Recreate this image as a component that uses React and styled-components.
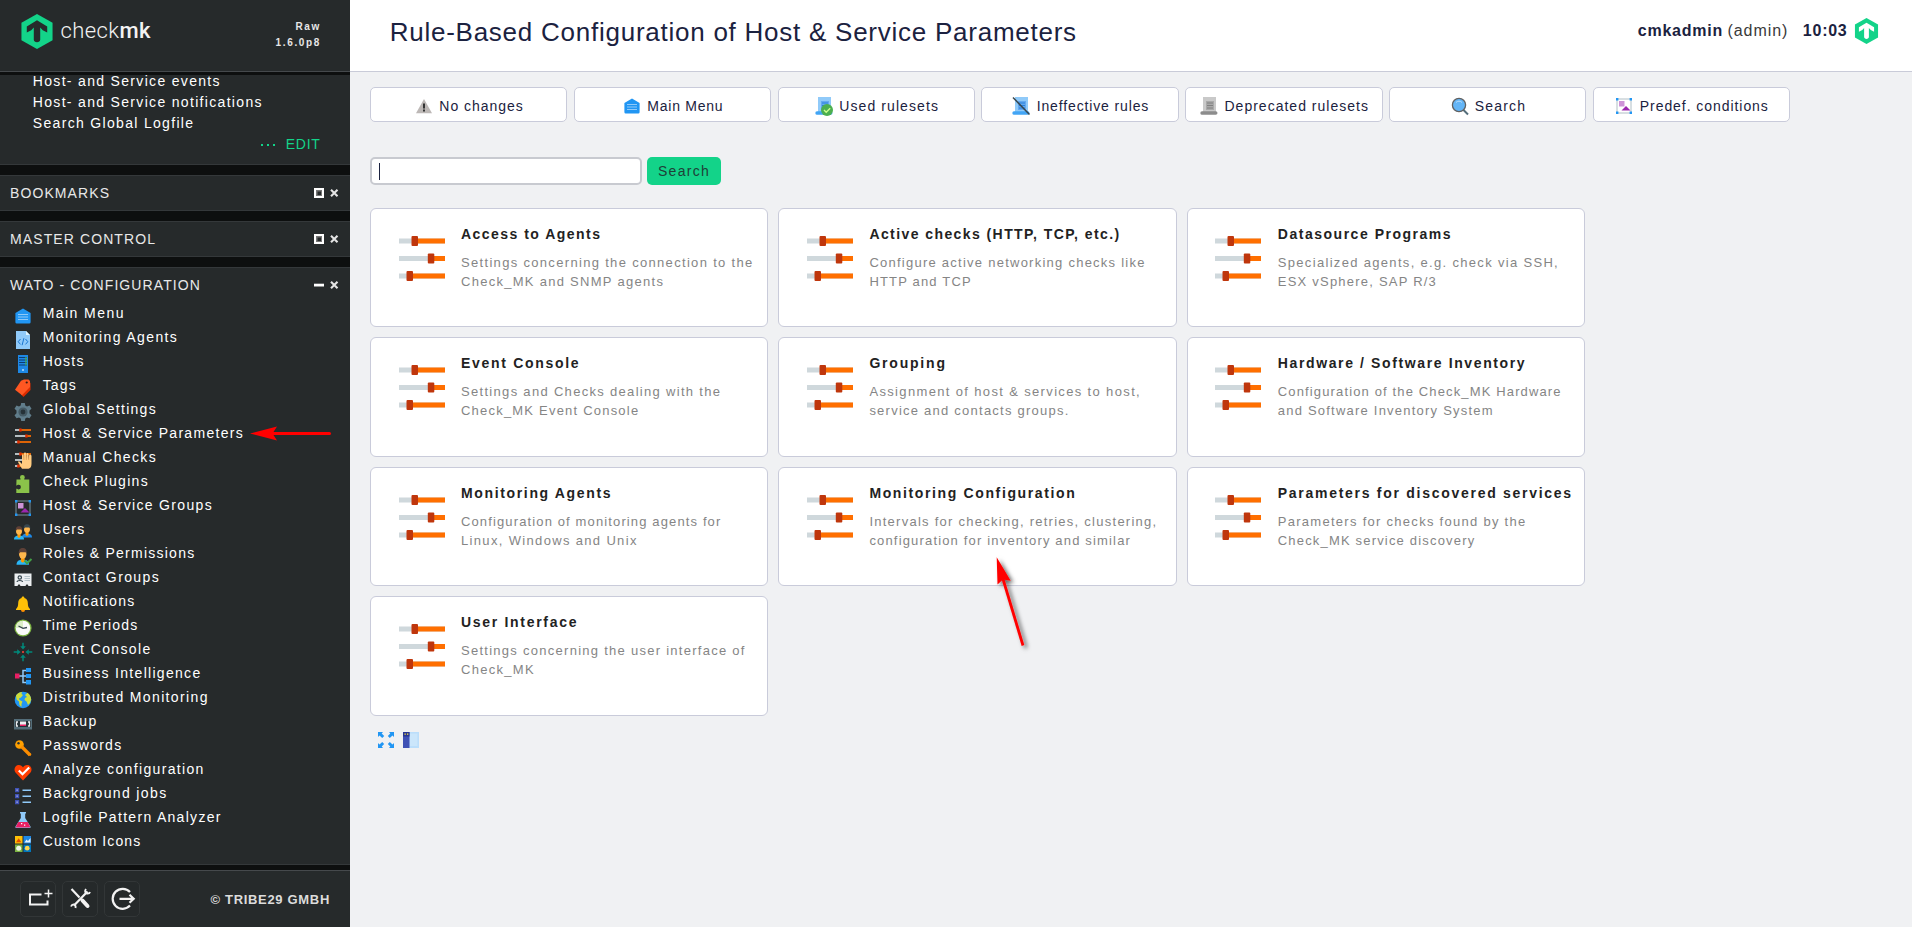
import React from "react";
import styled, { createGlobalStyle } from "styled-components";

const GlobalStyle = createGlobalStyle`
  * { box-sizing: border-box; }
  html, body, #root { margin: 0; height: 100%; }
  body { overflow: hidden; background: #f0f1f3; color: #1b2240; font: 14px "Liberation Sans", Arial, sans-serif; }
  svg { display: block; flex: none; overflow: visible; }
`;

const Page = styled.div`
  display: flex;
  position: relative;
  width: 1912px;
  height: 927px;
`;

/* ---------- sidebar ---------- */
const Sidebar = styled.aside`
  width: 350px;
  flex: none;
  display: flex;
  flex-direction: column;
  background: #0d0f0f;
  color: #fff;
`;
const SideHead = styled.header`
  height: 72px;
  flex: none;
  margin-bottom: 3px;
  padding: 14px 29px 0 20.5px;
  display: flex;
  background: #262a2b;
  border-bottom: 1px solid #45494c;
`;
const Wordmark = styled.div`
  margin: 5px auto 0 8px;
  font: 300 22px/24px Roboto, sans-serif;
  letter-spacing: 0.4px;
  color: #f2f2f2;
  b { font-weight: 500; }
`;
const Version = styled.div`
  padding-top: 5px;
  text-align: right;
  font-weight: bold;
  font-size: 10px;
  line-height: 16px;
  letter-spacing: 1.65px;
  color: #e6e6e6;
`;
const Snapins = styled.div`
  flex: 1;
  min-height: 0;
  overflow: hidden;
  display: flex;
  flex-direction: column;
  gap: 10px;
`;
const Snapin = styled.section`
  flex: none;
  background: #262a2b;
  border-top: 1px solid #34383a;
  border-bottom: 1px solid #34383a;
`;
const ScrolledSnapin = styled(Snapin)`
  padding: 0 29.5px 9px 32.800px;
  border-top: 0;
  line-height: 21px;
  letter-spacing: 1.32px;
`;
const TopLink = styled.div`
  height: 17px;
  line-height: 13px;
`;
const EditLink = styled.div`
  display: flex;
  justify-content: flex-end;
  align-items: center;
  gap: 11px;
  color: #13d389;
  font-size: 14px;
  letter-spacing: 0.7px;
`;
const SnapinHead = styled.div`
  display: flex;
  align-items: center;
  height: 34px;
  padding: 0 12px 0 10px;
  letter-spacing: 1.1px;
  color: #e8e8e8;
`;
const SnapinTitle = styled.span`
  flex: 1;
`;
const NavList = styled.ul`
  margin: 0;
  padding: 2px 0 8px 14px;
  list-style: none;
`;
const NavItem = styled.li`
  display: flex;
  gap: 10.7px;
  height: 24px;
  line-height: 18px;
  letter-spacing: ${(p) => p.$track}px;
  white-space: nowrap;
  svg { margin-top: 3px; }
`;
const SideFoot = styled.footer`
  display: flex;
  align-items: center;
  gap: 6px;
  height: 57px;
  flex: none;
  margin-top: 5px;
  padding: 0 20px;
  background: #262a2b;
  border-top: 1px solid #45494c;
`;
const FootButton = styled.button`
  width: 36px;
  height: 36px;
  padding: 0;
  display: grid;
  place-items: center;
  background: #25292a;
  border: 1px solid #323637;
  border-radius: 5px;
`;
const Copyright = styled.span`
  margin-left: auto;
  font-weight: bold;
  font-size: 13px;
  letter-spacing: 0.68px;
  color: #dcdcdc;
`;

/* ---------- main area ---------- */
const Main = styled.main`
  flex: 1;
  min-width: 0;
`;
const TopBar = styled.header`
  display: flex;
  height: 72px;
  padding: 17px 33px 0 39.700px;
  background: #fff;
  border-bottom: 1px solid #c9cbd8;
`;
const Title = styled.h1`
  margin: 0 auto 0 0;
  font-size: 26px;
  font-weight: normal;
  line-height: 30px;
  letter-spacing: 0.75px;
`;
const UserInfo = styled.div`
  display: flex;
  height: 28px;
  font-size: 16px;
  line-height: 27px;
  letter-spacing: 0.75px;
  b + span { margin: 0 14.500px 0 4.500px; color: #3a3a3a; letter-spacing: 0.95px; }
  svg { margin: 1px 0 0 6.500px; }
`;
const Content = styled.div`
  padding: 15px 20px;
`;
const ActionBar = styled.nav`
  display: grid;
  grid-template-columns: repeat(7, 197.4px);
  gap: 6.4px;
`;
const Action = styled.a`
  display: flex;
  align-items: center;
  justify-content: center;
  gap: 6.3px;
  height: 35px;
  padding: 3px 0 0 1.500px;
  background: #fff;
  border: 1px solid #c9cbda;
  border-radius: 5px;
  letter-spacing: ${(p) => p.$track}px;
  white-space: nowrap;
`;
const SearchForm = styled.form`
  display: flex;
  gap: 5px;
  margin: 35px 0 23px;
`;
const SearchField = styled.div`
  width: 272px;
  height: 28px;
  padding: 4px 0 0 7px;
  background: #fff;
  border: 2px solid #c8cad0;
  border-radius: 5px;
`;
const Caret = styled.div`
  width: 1px;
  height: 17px;
  background: #1b2240;
`;
const SearchButton = styled.button`
  width: 74px;
  height: 28px;
  padding: 0;
  border: 0;
  border-radius: 5px;
  background: #13d389;
  color: #1f4038;
  font: 14px "Liberation Sans", Arial, sans-serif;
  letter-spacing: 1.3px;
`;
const Cards = styled.div`
  display: grid;
  grid-template-columns: repeat(3, 398.4px);
  grid-auto-rows: 119.4px;
  gap: 10px;
`;
const Card = styled.a`
  display: flex;
  gap: 16.4px;
  padding: 16px 0 0 27.6px;
  background: #fff;
  border: 1px solid #c9cbda;
  border-radius: 6px;
  svg { margin-top: 14px; }
`;
const CardTitle = styled.h3`
  margin: 0 0 10px;
  color: #222;
  font-size: 14px;
  line-height: 18px;
  letter-spacing: ${(p) => p.$track}px;
  white-space: nowrap;
`;
const CardLine = styled.div`
  color: #858585;
  font-size: 13px;
  line-height: 19px;
  letter-spacing: ${(p) => p.$track}px;
  white-space: nowrap;
`;
const PageTools = styled.div`
  display: flex;
  gap: 9px;
  margin: 16px 0 0 8px;
`;
const Annotations = styled.svg`
  position: absolute;
  inset: 0;
  pointer-events: none;
`;

/* ---------- drawings ---------- */
const Hexagon = ({ w, h, inner }) => (
  <svg width={w} height={h} viewBox="0 0 32 36">
    <path fill="#13d389" d="M16 0 32 9v18l-16 9L0 27V9z" />
    <path fill={inner} d="M16 6.5 26.5 12.8v6.2l-4.600-2.400-2.600-2.800v12.600c0 1.400-1.500 2.600-3.300 2.600s-3.300-1.200-3.300-2.600V13.800L10.100 16.600 5.500 19v-6.200z" />
  </svg>
);

const Sliders = ({ w = 46, h = 38 }) => (
  <svg width={w} height={h} viewBox="0 0 46 38">
    {[[0.5, 12.500], [18, 28.800], [35.500, 7.500]].map(([y, x]) => (
      <g key={y} transform={`translate(0 ${y - 1})`}>
        <path fill="#cfd8dc" d="M0 0h46v5H0z" />
        <path fill="#ff6f00" d={`M${x + 3} 0H46v5H${x + 3}z`} />
        <rect fill="#bf360c" x={x} y="-2.500" width="6.500" height="10" rx="1" />
      </g>
    ))}
  </svg>
);

const Scroll = ({ a, b, c, lines }) => (
  <>
    <path fill={a} d="M3 0h13v15H3z" />
    <path fill={c} d="M2 14.200h13.700a1.700 1.700 0 0 1 0 3.600H2.300a1.700 1.700 0 0 1-.3-3.600z" />
    <path fill={b} d="M6 4h8v9H6z" />
    <path stroke={lines} strokeWidth=".8" d="M7 6h6M7 8.500h6M7 11h6" />
  </>
);

const Person = ({ x = 0, y = 0, hair = "#5d4037", body = "#29b6f6" }) => (
  <g transform={`translate(${x} ${y})`}>
    <path fill={body} d="M0 14c0-3 2-4 5-4s5 1 5 4z" />
    <path fill="#ff9800" d="M3.500 8h3v3.500L5 12.500l-1.500-1z" />
    <ellipse cx="5" cy="5.500" rx="3" ry="3.800" fill="#ffb74d" />
    <path fill={hair} d="M1.800 5.500C1.500 2 3 .7 5 .7s3.600 1.300 3.200 4.800L7.300 4H3z" />
  </g>
);

const GroupSelect = ({ line = "#78909c" }) => (
  <>
    <path fill="none" stroke={line} strokeWidth="1" d="M2 2h14v14H2z" />
    <path fill="#ce93d8" d="M4 4h5.500v5.500H4z" />
    <path fill="#9c27b0" d="M6.500 13.500 11 9l4.500 4.500z" />
    <path fill="#2196f3" d="M1 1h2.400v2.400H1zM14.600 1H17v2.400h-2.400zM1 14.600h2.400V17H1zM14.600 14.600H17V17h-2.400z" />
  </>
);

const HouseShape = (
  <>
    <path fill="#2196f3" d="M9 1.500 16.600 6v9.300a1.300 1.300 0 0 1-1.300 1.200H2.700a1.300 1.300 0 0 1-1.300-1.200V6z" />
    <path stroke="#90caf9" strokeWidth="1.100" d="M4 7.500h10M4 10h10M4 12.500h10" />
  </>
);

const MiniSliders = (
  <>
    {[[3, 6], [9, 12], [15, 4]].map(([y, x]) => (
      <g key={y}>
        <path stroke="#cfd8dc" strokeWidth="1.700" d={`M1 ${y}h${x}`} />
        <path stroke="#ff6f00" strokeWidth="1.700" d={`M${x + 1} ${y}H17`} />
        <path stroke="#dd2c00" strokeWidth="3.200" d={`M${x - 0.800} ${y}h2.400`} />
      </g>
    ))}
  </>
);

const icons = {
  house: HouseShape,
  code: (
    <>
      <path fill="#90caf9" d="M2 0h10l4 4v14H2z" />
      <path fill="#e1f5fe" d="M12 0l4 4h-4z" />
      <path fill="none" stroke="#1976d2" strokeWidth="1" d="M6.500 8 4.200 10.700l2.300 2.700M11.500 8l2.300 2.700-2.300 2.700M9.900 7.200 8.100 14.200" />
    </>
  ),
  host: (
    <>
      <path fill="#1e88e5" d="M4 0h10v18H4z" />
      <path stroke="#0d3c73" strokeWidth="1" d="M5 2.500h8M5 5h8M5 7.500h8M5 10h8" />
      <path stroke="#4caf50" strokeWidth="1.200" d="M12 2v8.500" />
      <circle cx="9" cy="15" r="1" fill="#bbdefb" />
    </>
  ),
  tag: (
    <>
      <path fill="#dd2c00" d="M16.500 3.500V11L9.500 18 7 15.500z" />
      <path fill="#ff5722" d="M14.500.5 16 2v6l-8 8.300-7-5.600 6-8.900L10 .5z" />
      <circle cx="12.700" cy="3.500" r="1.100" fill="#3a1a10" />
    </>
  ),
  gear: (
    <>
      <path fill="#607d8b" d="M7.200 0h3.600l.5 2.600 1.700.9 2.500-1L17.500 5.700l-2 1.800v2.800l2 1.900-2 3.100-2.500-.9-1.700 1L10.800 18H7.200l-.5-2.600-1.700-1-2.500.9-2-3.100 2-1.900V7.500l-2-1.800L2.500 2.500l2.500 1 1.700-.9z" />
      <circle cx="9" cy="9" r="4.600" fill="#455a64" />
      <circle cx="9" cy="9" r="2.400" fill="#263238" />
    </>
  ),
  sliders: MiniSliders,
  manual: (
    <>
      {MiniSliders}
      <path fill="#ffcc80" d="M8 17.800 4.300 11.800c-.7-1.400.9-2.100 1.700-.9L8 13V4.300c0-1.300 1.700-1.300 1.800 0L10 8.500V2.700c0-1.500 2-1.500 2.100 0V8.500l.4-5.500c0-1.500 2-1.500 2 0v6l.5-4.300c.2-1.400 2.500-1.200 2.500.2V13c0 3-1.500 4.500-3 4.800z" />
      <path stroke="#d98f45" strokeWidth=".6" d="M9.900 9V4M12.300 9V3.500M14.700 9v-5" />
    </>
  ),
  plugin: (
    <path fill="#8bc34a" d="M2.500 4.500h4c.4-.8-.5-1.200-.5-2.200a2.400 2.400 0 0 1 4.800 0c0 1-.9 1.400-.5 2.200h5V18h-13v-4.200c.8-.4 1.200.6 2.300.6a2.300 2.300 0 0 0 0-4.600c-1.100 0-1.500 1-2.300.6z" />
  ),
  groups: <GroupSelect />,
  users: (
    <>
      <Person x={8} y={0.500} hair="#37474f" body="#1e88e5" />
      <Person x={0} y={2.500} />
    </>
  ),
  roles: (
    <>
      <g transform="translate(2.500 .2) scale(1.250)"><Person /></g>
      <path fill="none" stroke="#43a047" strokeWidth="2" d="M10.500 13.500 13 16.300 17.500 12" />
    </>
  ),
  contact: (
    <>
      <path fill="#eceff1" d="M.5 2.500h17V15h-3l-.8-1.500h-1.400L11.500 15h-5l-.8-1.500H4.300L3.500 15h-3z" />
      <circle cx="5.800" cy="6.500" r="1.700" fill="none" stroke="#37474f" strokeWidth="1.200" />
      <path fill="none" stroke="#37474f" strokeWidth="1.200" d="M3 11c.3-2 5.300-2 5.600 0" />
      <path stroke="#b0bec5" strokeWidth=".9" d="M10.500 5.500H16M10.500 7.500H16M10.500 9.500H16" />
    </>
  ),
  bell: (
    <>
      <path fill="#ffc107" d="M9 1.500c.9 0 1.400.6 1.400 1.400C13 3.600 13.800 5.700 13.800 8c0 3 .8 4.700 2.200 6v1H2v-1c1.400-1.300 2.200-3 2.200-6 0-2.300.8-4.400 3.400-5.100 0-.8.500-1.400 1.400-1.400z" />
      <path fill="#ff8f00" d="M7 15h4a2 2 0 0 1-4 0z" />
    </>
  ),
  clock: (
    <>
      <circle cx="9" cy="9" r="8.600" fill="#7cb342" />
      <circle cx="9" cy="9" r="7.300" fill="#fafafa" />
      <path fill="#dcedc8" d="M9 9V1.700A7.300 7.300 0 0 0 1.700 9z" />
      <path fill="none" stroke="#37474f" strokeWidth="1.300" d="M4.500 7 9 9.300l4-.8" />
    </>
  ),
  event: (
    <>
      <path stroke="#00897b" strokeWidth="1.500" d="M9-.3V5M9 13v5.300M-.3 9H5M13 9h5.300" />
      <path fill="#00897b" d="M6.200 3.200h5.600L9 6.600zM6.200 14.800h5.600L9 11.400zM3.200 6.200v5.600L6.600 9zM14.800 6.200v5.600L11.400 9z" />
      <circle cx="9" cy="9" r="1.100" fill="#f44336" />
    </>
  ),
  bi: (
    <>
      <path fill="none" stroke="#90caf9" strokeWidth="1.500" d="M5 9h7M13 3.500H9v12h4" />
      <path fill="#e91e63" d="M1 6.500h4.500v5H1z" />
      <path fill="#2196f3" d="M12 1h5v4h-5zM12 7h5v4h-5zM12 13h5v4.500h-5z" />
    </>
  ),
  globe: (
    <>
      <circle cx="9" cy="9" r="8.300" fill="#2196f3" />
      <path fill="#cddc39" d="M2 4.500C4 1.500 6 1 8 .9L7.500 3 9 4 7 6.500 5 7.500 5.500 9 8.500 10.500 7.500 13v3L5.500 14 5 10.500 2.500 8.500zM11 4l2.500-2.300c2 1.300 3.500 4 3.700 6.800L16 12l-2 2-1.500-3.500L10.500 9l.5-2 2-1z" />
    </>
  ),
  tape: (
    <>
      <path fill="#546e7a" d="M0 4h18v10.500H0z" />
      <path fill="#263238" d="M1 6h16v6H1z" />
      <path fill="#eceff1" d="M6 6.500h6v4H6z" />
      <path fill="#e91e63" d="M6 9.500h6v1.500H6z" />
      <path fill="none" stroke="#eceff1" strokeWidth="1.300" d="M4 7H2.500v4H4M14 7h1.500v4H14" />
    </>
  ),
  key: (
    <>
      <circle cx="5.500" cy="5.500" r="4.300" fill="#ffa000" />
      <circle cx="4.500" cy="4.300" r="1.200" fill="#263238" />
      <path stroke="#fb8c00" strokeWidth="3.200" d="M7.500 7.500 16 16" />
      <path fill="#fb8c00" d="m9.500 12 2 .5.500 1.500 1.500.5.500 1.700L16.500 17l1-2z" />
    </>
  ),
  heart: (
    <>
      <path fill="#ff3d00" d="M9 17.500 1.500 9.500C-.5 7 .5 2.500 4.500 2 6.500 1.800 8.200 3 9 4.500 9.800 3 11.500 1.800 13.500 2c4 .5 5 5 3 7.500z" />
      <path fill="none" stroke="#fff" strokeWidth="2.200" d="m4.800 7.500 3.700 3.800 6.700-6.800" />
    </>
  ),
  jobs: (
    <>
      <path fill="#3f51b5" d="M1 1h4.200v4.200H1zM1 7h4.200v4.200H1zM1 13h4.200v4.200H1z" />
      <path fill="#c5cae9" d="M2.500 2.500h1.200v1.200H2.500zM2.500 8.500h1.200v1.200H2.500zM2.500 14.500h1.200v1.200H2.500z" />
      <path stroke="#90caf9" strokeWidth="1.500" d="M8.500 3.200h8.500M8.500 9.200h8.500M8.500 15.200h8.500" />
    </>
  ),
  flask: (
    <>
      <path fill="#90caf9" d="M6 1h6v1.500h-.8V7l5.300 8.500c.4.900 0 1.500-1 1.500h-13c-1 0-1.400-.6-1-1.500L6.800 7V2.500H6z" />
      <path fill="#e91e63" d="M4.300 11h9.400l2.300 4.500c.2.600 0 1-.5 1h-13c-.5 0-.7-.4-.5-1z" />
      <path fill="#fff" d="M7 12h1.300v1.300H7zM10 13.500h1.300v1.300H10z" />
    </>
  ),
  custom: (
    <>
      <path fill="#ffc107" d="M1 1h7.500v7.500H1z" />
      <path fill="#1e88e5" d="M9.500 1H17v7.500H9.500z" />
      <path fill="#7cb342" d="M1 9.500h7.500V17H1z" />
      <path fill="#0277bd" d="M9.500 9.500H17V17H9.500z" />
      <path fill="#e65100" d="m2 7.300 2.700-4 2.700 4z" />
      <path fill="#e3f2fd" d="m10.500 7.500 2-3 1.500 1.500L16.500 3v4.500z" />
      <circle cx="4.700" cy="13.200" r="2.500" fill="#f1f8e9" />
      <circle cx="13.200" cy="13.200" r="2.400" fill="#ffd54f" />
    </>
  ),
  warning: (
    <>
      <path fill="#bdb8b6" d="M9 2 17 16.300H1z" />
      <path fill="#333" d="M8 6.500h2v5H8zM8 12.500h2v2H8z" />
    </>
  ),
  used: (
    <>
      <Scroll a="#90caf9" b="#64a8f0" c="#42a5f5" lines="#1976d2" />
      <circle cx="12" cy="13" r="6" fill="#4caf50" />
      <path fill="none" stroke="#ccff90" strokeWidth="1.400" d="m9 13 2.200 2.200 4-4" />
    </>
  ),
  ineffective: (
    <>
      <Scroll a="#90caf9" b="#64a8f0" c="#42a5f5" lines="#1976d2" />
      <path stroke="#37474f" strokeWidth="1.500" d="M1 .5 17.500 17.500" />
    </>
  ),
  deprecated: <Scroll a="#c9c9c9" b="#a9a9a9" c="#8c8c8c" lines="#777" />,
  search: (
    <>
      <path stroke="#546e7a" strokeWidth="2" d="m12 12.500 5 5" />
      <circle cx="8" cy="8" r="6.600" fill="#64b5f6" stroke="#616161" strokeWidth="1.300" />
      <path fill="none" stroke="#bbdefb" strokeWidth="1" d="M5 5.500c1.500-1.800 4.500-1.800 6 0" />
    </>
  ),
  predef: <GroupSelect line="#b0bec5" />,
};

const Icon = ({ name }) => (
  <svg width="18" height="18" viewBox="0 0 18 18">{icons[name]}</svg>
);

const WindowControls = ({ open }) => (
  <svg width="24" height="10" viewBox="0 0 24 10">
    {open ? (
      <path fill="#fff" d="M0 3.700h10v2.800H0z" />
    ) : (
      <>
        <path fill="#777" d="M2 2h6v6H2z" />
        <path fill="#262a2b" d="M3.500 3.500h3.500v3.500H3.500z" />
        <path fill="none" stroke="#fff" strokeWidth="2" d="M1 1h8v8H1z" />
      </>
    )}
    <path stroke="#e4e4e4" strokeWidth="2.100" d="m17 1.800 6.500 6.500M23.500 1.800 17 8.300" />
  </svg>
);

/* ---------- data ---------- */
const nav = [
  ["house", "Main Menu", 1.44], ["code", "Monitoring Agents", 1.38], ["host", "Hosts", 1.23],
  ["tag", "Tags", 1.14], ["gear", "Global Settings", 1.29], ["sliders", "Host & Service Parameters", 1.3],
  ["manual", "Manual Checks", 1.38], ["plugin", "Check Plugins", 1.29], ["groups", "Host & Service Groups", 1.33],
  ["users", "Users", 1.24], ["roles", "Roles & Permissions", 1.24], ["contact", "Contact Groups", 1.38],
  ["bell", "Notifications", 1.27], ["clock", "Time Periods", 1.14], ["event", "Event Console", 1.38],
  ["bi", "Business Intelligence", 1.3], ["globe", "Distributed Monitoring", 1.36], ["tape", "Backup", 1.38],
  ["key", "Passwords", 1.25], ["heart", "Analyze configuration", 1.34], ["jobs", "Background jobs", 1.37],
  ["flask", "Logfile Pattern Analyzer", 1.3], ["custom", "Custom Icons", 1.08],
];

const actions = [
  ["warning", "No changes", 0.98], ["house", "Main Menu", 0.75], ["used", "Used rulesets", 1.08],
  ["ineffective", "Ineffective rules", 0.86], ["deprecated", "Deprecated rulesets", 1.01],
  ["search", "Search", 1.15], ["predef", "Predef. conditions", 0.94],
];

const cards = [
  ["Access to Agents", 1.47, ["Settings concerning the connection to the", 1.32], ["Check_MK and SNMP agents", 1.28]],
  ["Active checks (HTTP, TCP, etc.)", 1.42, ["Configure active networking checks like", 1.25], ["HTTP and TCP", 1.17]],
  ["Datasource Programs", 1.52, ["Specialized agents, e.g. check via SSH,", 1.32], ["ESX vSphere, SAP R/3", 1.22]],
  ["Event Console", 1.7, ["Settings and Checks dealing with the", 1.31], ["Check_MK Event Console", 1.21]],
  ["Grouping", 1.8, ["Assignment of host & services to host,", 1.35], ["service and contacts groups.", 1.24]],
  ["Hardware / Software Inventory", 1.62, ["Configuration of the Check_MK Hardware", 1.14], ["and Software Inventory System", 1.22]],
  ["Monitoring Agents", 1.65, ["Configuration of monitoring agents for", 1.13], ["Linux, Windows and Unix", 1.34]],
  ["Monitoring Configuration", 1.63, ["Intervals for checking, retries, clustering,", 1.26], ["configuration for inventory and similar", 1.17]],
  ["Parameters for discovered services", 1.72, ["Parameters for checks found by the", 1.28], ["Check_MK service discovery", 1.18]],
  ["User Interface", 1.7, ["Settings concerning the user interface of", 1.27], ["Check_MK", 1.3]],
];

export default function App() {
  return (
    <Page>
      <GlobalStyle />
      <Sidebar>
        <SideHead>
          <Hexagon w={32} h={35} inner="#262a2b" />
          <Wordmark>check<b>mk</b></Wordmark>
          <Version>Raw<br />1.6.0p8</Version>
        </SideHead>
        <Snapins>
          <ScrolledSnapin>
            <TopLink>Host- and Service events</TopLink>
            <div>Host- and Service notifications</div>
            <div>Search Global Logfile</div>
            <EditLink>
              <svg width="14" height="2" viewBox="0 0 14 2">
                <path fill="#13d389" d="M0 0h2v2H0zM6 0h2v2H6zM12 0h2v2h-2z" />
              </svg>
              EDIT
            </EditLink>
          </ScrolledSnapin>
          <Snapin>
            <SnapinHead><SnapinTitle>BOOKMARKS</SnapinTitle><WindowControls /></SnapinHead>
          </Snapin>
          <Snapin>
            <SnapinHead><SnapinTitle>MASTER CONTROL</SnapinTitle><WindowControls /></SnapinHead>
          </Snapin>
          <Snapin>
            <SnapinHead><SnapinTitle>WATO - CONFIGURATION</SnapinTitle><WindowControls open /></SnapinHead>
            <NavList>
              {nav.map(([icon, label, track]) => (
                <NavItem key={label} $track={track}><Icon name={icon} />{label}</NavItem>
              ))}
            </NavList>
          </Snapin>
        </Snapins>
        <SideFoot>
          <FootButton>
            <svg width="24" height="24" viewBox="0 0 24 24" fill="none" stroke="#f2f2f2">
              <path strokeWidth="2" d="M15.500 7.500H4v10h17.500v-4" />
              <path strokeWidth="1.500" d="M22.500 2.500v8M18.500 6.500h8" />
            </svg>
          </FootButton>
          <FootButton>
            <svg width="24" height="24" viewBox="0 0 24 24" fill="none" stroke="#f2f2f2">
              <path strokeWidth="2.200" d="m3.500 2 8 8.500M6 18.500 19.500 4.500" />
              <path strokeWidth="4" strokeLinecap="round" d="m14.500 13.500 5 5.500" />
              <path strokeWidth="1.900" d="M18 2c-1.500 2-1 4 1 4.500 1.500.2 2.700-.5 3-1.500M7.500 21c.5-2-.5-3.500-2-3.500-1.300 0-2 .8-2.500 2" />
            </svg>
          </FootButton>
          <FootButton>
            <svg width="24" height="24" viewBox="0 0 24 24" fill="none" stroke="#f2f2f2" strokeWidth="2.200">
              <path d="M20 5a10 10 0 1 0 0 13.600" />
              <path d="M9.500 11.800h14M19.500 7.800l4.200 4-4.200 4" />
            </svg>
          </FootButton>
          <Copyright>© TRIBE29 GMBH</Copyright>
        </SideFoot>
      </Sidebar>

      <Main>
        <TopBar>
          <Title>Rule-Based Configuration of Host &amp; Service Parameters</Title>
          <UserInfo>
            <b>cmkadmin</b><span>(admin)</span><b>10:03</b>
            <Hexagon w={25} h={26} inner="#fff" />
          </UserInfo>
        </TopBar>
        <Content>
          <ActionBar>
            {actions.map(([icon, label, track]) => (
              <Action key={label} $track={track}><Icon name={icon} />{label}</Action>
            ))}
          </ActionBar>
          <SearchForm>
            <SearchField><Caret /></SearchField>
            <SearchButton type="button">Search</SearchButton>
          </SearchForm>
          <Cards>
            {cards.map(([title, track, ...lines]) => (
              <Card key={title}>
                <Sliders />
                <div>
                  <CardTitle $track={track}>{title}</CardTitle>
                  {lines.map(([text, t]) => <CardLine key={text} $track={t}>{text}</CardLine>)}
                </div>
              </Card>
            ))}
          </Cards>
          <PageTools>
            <svg width="16" height="16" viewBox="0 0 16 16">
              <path fill="#2196f3" d="M0 0h5L3.700 1.400 6.200 4 4.200 6 1.500 3.500 0 5zM16 0h-5l1.300 1.400L9.800 4l2 2 2.700-2.500L16 5zM0 16h5l-1.300-1.400L6.200 12l-2-2-2.700 2.500L0 11zM16 16h-5l1.300-1.400L9.800 12l2-2 2.700 2.500L16 11z" />
            </svg>
            <svg width="16" height="16" viewBox="0 0 16 16">
              <path fill="#bbdefb" d="M6 0h10v16H6z" />
              <path fill="#e3f2fd" d="M7 1.500h7.500V14H7z" opacity=".4" />
              <path fill="#3f51b5" d="M0 0h6.500v16H0z" />
              <path fill="#283593" d="M0 0h6.500v4.500H0z" />
              <path fill="#ffeb3b" d="M1.500 1.500h1.300v1.300H1.500zM4 1.500h1.300v1.300H4z" />
            </svg>
          </PageTools>
        </Content>
      </Main>

      <Annotations width="1912" height="927" viewBox="0 0 1912 927">
        <defs>
          <filter id="shade" x="-50%" y="-20%" width="220%" height="150%">
            <feDropShadow dx="3" dy="2.500" stdDeviation="2" floodColor="#000" floodOpacity=".6" />
          </filter>
        </defs>
        <g fill="#f00" stroke="#f00">
          <path strokeWidth="3" strokeLinecap="round" d="M272 433.500h57.500" />
          <path stroke="none" d="M250 433.500 277 426.500 272.500 433.500 277 440.500z" />
          <g filter="url(#shade)">
            <path strokeWidth="2.800" d="M1003 579 1023 645.500" />
            <path stroke="none" d="M996.700 557.300 1010.700 580.700 1003 579.500 997.500 584.500z" />
          </g>
        </g>
      </Annotations>
    </Page>
  );
}
